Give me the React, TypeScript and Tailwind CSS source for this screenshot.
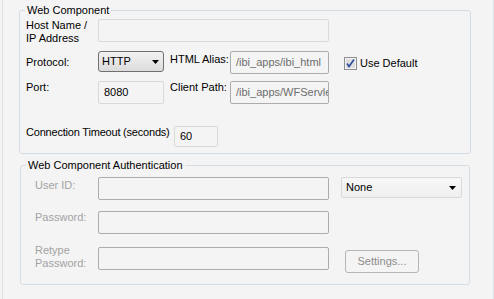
import React from 'react';

const font = { fontFamily: '"Liberation Sans", Arial, sans-serif' };

function Arrow() {
  return (
    <svg className="w-[7px] h-[4px]" viewBox="0 0 7 4">
      <path d="M0 0h7L3.5 4z" fill="#000" />
    </svg>
  );
}

function Field({ value, w, h = 'h-[23px]', border = 'border-[#acacac]', text = 'text-black' }: { value?: string; w: string; h?: string; border?: string; text?: string }) {
  return (
    <div className={`${w} ${h} ${border} ${text} border rounded-[2px] flex items-center pl-[5px] overflow-hidden whitespace-nowrap`}>
      {value}
    </div>
  );
}

export default function App() {
  return (
    <div className="w-[494px] h-[299px] bg-[#f4f4f4] text-[11px] leading-[13px] text-black overflow-hidden" style={font}>
      <div className="ml-[2px] w-[492px] h-full border-x border-[#dde2e8] pt-[4px]">
        <fieldset className="ml-[16px] w-[452px] border border-[#d5dde4] rounded-[3px]">
          <legend className="ml-[5px] px-[2px]">Web Component</legend>
          <div className="pl-[6px] pt-[2px] pb-[6px]">
            <div className="flex items-start h-[26px]">
              <span className="w-[72px]">Host Name /<br />IP Address</span>
              <Field w="w-[231px]" border="border-[#dadada]" />
            </div>
            <div className="flex items-start h-[23px] mt-[6px]">
              <span className="w-[72px] mt-[5px]">Protocol:</span>
              <div className="w-[66px] h-[21px] border border-[#707070] rounded-[3px] bg-gradient-to-b from-[#f2f2f2] to-[#dcdcdc] flex items-center justify-between pl-[3px] pr-[4px]">
                <span>HTTP</span>
                <Arrow />
              </div>
              <span className="w-[60px] ml-[6px] mt-[2px]">HTML Alias:</span>
              <Field value="/ibi_apps/ibi_html" w="w-[99px]" text="text-[#6d6d6d]" />
              <svg className="w-[13px] h-[13px] ml-[15px] mt-[6px]" viewBox="0 0 13 13">
                <rect x="0.5" y="0.5" width="12" height="12" fill="#dedede" stroke="#8e8f8f" />
                <rect x="1.5" y="1.5" width="10" height="10" fill="none" stroke="#f4f4f4" />
                <path d="M3 6.5l2 3 5-7" fill="none" stroke="#2c4e9c" strokeWidth="1.6" />
              </svg>
              <span className="ml-[3px] mt-[6px]">Use Default</span>
            </div>
            <div className="flex items-start h-[23px] mt-[7px]">
              <span className="w-[72px]">Port:</span>
              <Field value="8080" w="w-[66px]" border="border-[#d9d9d9]" />
              <span className="w-[60px] ml-[6px]">Client Path:</span>
              <Field value="/ibi_apps/WFServle" w="w-[99px]" text="text-[#6d6d6d]" />
            </div>
            <div className="flex items-start h-[21px] mt-[22px]">
              <span className="w-[148px] whitespace-nowrap tracking-[-0.2px]">Connection Timeout (seconds)</span>
              <Field value="60" w="w-[44px]" h="h-[21px]" border="border-[#d9d9d9]" />
            </div>
          </div>
        </fieldset>

        <fieldset className="ml-[17px] mt-[5px] w-[450px] border border-[#d5dde4] rounded-[3px]">
          <legend className="ml-[5px] px-[2px]">Web Component Authentication</legend>
          <div className="pl-[14px] pt-[5px] pb-[11px] text-[#a3a3a3]">
            <div className="flex items-start h-[23px]">
              <span className="w-[63px] mt-[2px]">User ID:</span>
              <Field w="w-[231px]" />
              <div className="w-[121px] h-[21px] ml-[12px] border border-[#d9d9d9] rounded-[2px] bg-gradient-to-b from-[#f8f8f8] to-[#efefef] flex items-center justify-between pl-[4px] pr-[5px] text-black">
                <span>None</span>
                <Arrow />
              </div>
            </div>
            <div className="flex items-start h-[23px] mt-[11px]">
              <span className="w-[63px]">Password:</span>
              <Field w="w-[231px]" />
            </div>
            <div className="flex items-start h-[29px] mt-[10px]">
              <span className="w-[63px]">Retype<br />Password:</span>
              <div className="mt-[3px]">
                <Field w="w-[231px]" />
              </div>
              <button className="w-[74px] h-[23px] ml-[16px] mt-[6px] border border-[#b5b5b5] rounded-[3px] text-[#8d8d8d] bg-[#f4f4f4]">
                Settings...
              </button>
            </div>
          </div>
        </fieldset>
      </div>
    </div>
  );
}
